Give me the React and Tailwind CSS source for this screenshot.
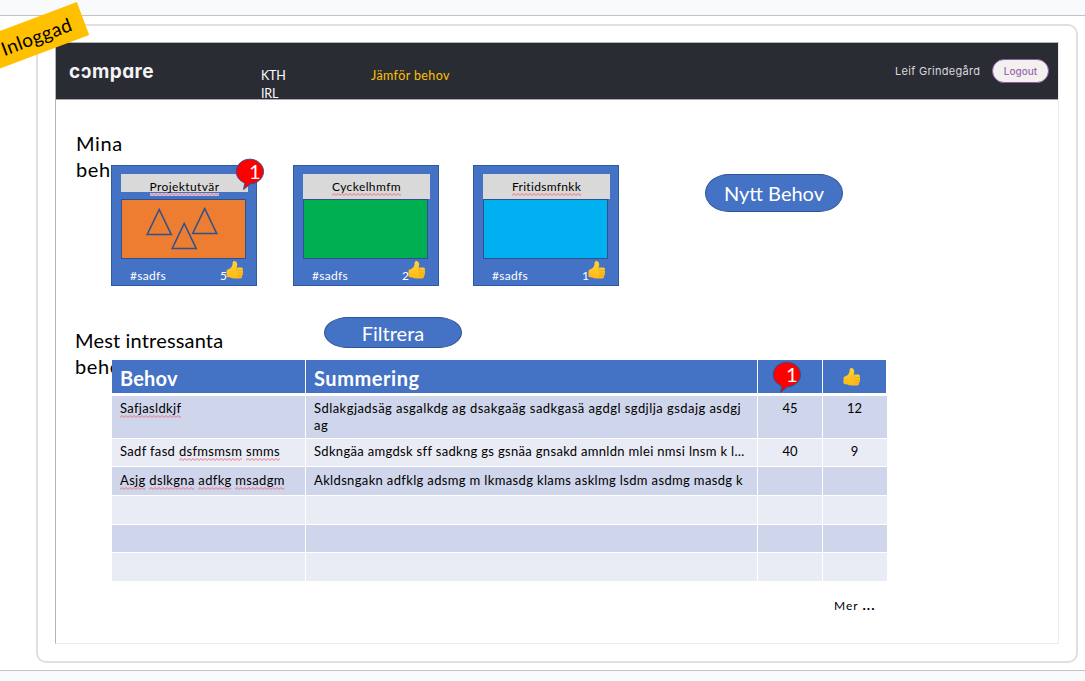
import React from "react";

const Thumb = ({ className = "" }) => (
  <svg viewBox="0 0 18 18" className={"h-[18px] w-[18px] shrink-0 " + className}>
    <defs>
      <linearGradient id="thumb" x1="0" y1="0" x2="0" y2="1">
        <stop offset="0" stopColor="#ffd23a" />
        <stop offset="1" stopColor="#fdb913" />
      </linearGradient>
    </defs>
    <path
      d="M.6 9.400Q.8 8.600 2.500 8.300 4.600 7.600 5.700 5.800 6.700 4.200 6.600 1.800 6.800.1 8.300.1 11 .3 11.200 3.500 11.200 5.300 10.500 6.500H15.400Q16.900 6.700 17 8 17 9 16.500 9.400 17.300 9.900 17.200 10.900 17.100 11.700 16.600 12.100 17 12.600 16.900 13.500 16.700 14.400 16 14.700 16.200 15.300 16 16 15.500 17.500 13.800 17.600H8.500Q6 17.600 4.300 16.600 2.500 16.200 1.200 16 .4 15.700.4 14Z"
      fill="url(#thumb)"
    />
    <path d="M11.200 9.500H16.300M11.200 12.200H16.400M11.300 14.800H15.900M11.300 7Q10.100 8.200 11.200 9.500" fill="none" stroke="#e59a12" strokeWidth=".6" />
  </svg>
);

const Bubble = ({ className = "" }) => (
  <div className={"h-[33px] w-[30px] " + className}>
    <svg viewBox="0 0 30 33" className="absolute inset-0 h-full w-full">
      <path d="M8.600 31.500 9.800 24.900C4.500 23 1.300 18.800 1.300 13.500 1.300 6.700 7.300 1.200 14.800 1.200S28.500 6.700 28.500 13.500 22.500 25.600 15.500 25.700Z" fill="#ff0000" stroke="#2f528f" strokeWidth="1" />
    </svg>
    <span className="absolute left-[14px] top-0 text-[20px] leading-[26px] text-white">1</span>
  </div>
);

const Spell = ({ children, halo }) => (
  <span className="relative inline-block">
    {children}
    <svg className="absolute -bottom-px left-0 h-[3px] w-full overflow-hidden">
      <defs>
        <pattern id="zigzag" width="4" height="3" patternUnits="userSpaceOnUse">
          <path d="M-1 1.500 0 2.500 2 .5 4 2.500 5 1.500" fill="none" stroke="#f0606c" strokeWidth=".9" />
        </pattern>
      </defs>
      {halo && <rect width="100%" height="3" fill="#e3dbe6" fillOpacity=".85" />}
      <rect width="100%" height="3" fill="url(#zigzag)" />
    </svg>
  </span>
);

const Card = ({ title, titleClass, gapClass, fill, likes, halo, children }) => (
  <div className="relative flex h-[121px] w-[146px] flex-col border border-[#2f5a9f] bg-[#4472c4] pl-[9px] pt-[8px]">
    <div className={"relative flex w-[127px] shrink-0 items-start justify-center bg-[#d9d9d9] pt-[5px] text-[12px] leading-[16px] text-black " + titleClass}>
      <Spell halo={halo}>{title}</Spell>
    </div>
    <div className={"h-[60px] w-[125px] shrink-0 border border-[#2f528f] " + gapClass + " " + fill}>{children}</div>
    <div className="flex pl-[9px] pt-[8px] text-[12px] leading-[18px] text-white">
      <span className="w-[90px] tracking-[0.3px]">#sadfs</span>
      <span className="w-[6px]">{likes}</span>
      <Thumb className="-mt-[6px]" />
    </div>
  </div>
);

const Pill = ({ className, children }) => (
  <button className={"flex w-[138px] items-center justify-center rounded-[24px/50%] border border-[#2f5597] bg-[#4472c4] text-[20px] text-white " + className}>{children}</button>
);

const Row = ({ first, second, a, b, className, track = "" }) => (
  <div className={"grid grid-cols-[193px_451px_64px_64px] gap-x-px text-[13px] leading-[17px] *:pt-[4px] " + className}>
    <div className="whitespace-nowrap px-[8px] tracking-[0.33px]">{first}</div>
    <div className={"whitespace-nowrap px-[8px] " + track}>{second}</div>
    <div className="text-center">{a}</div>
    <div className="pr-px text-center">{b}</div>
  </div>
);

export default function App() {
  return (
    <div className="relative flex h-[681px] w-[1085px] flex-col overflow-hidden bg-white font-['Lato',sans-serif] text-black">
      <div className="h-[16px] shrink-0 border-b border-[#c4c4c4] bg-[#f9fafc]" />
      <div className="ml-[36px] mt-[8px] h-[639px] w-[1042px] shrink-0 rounded-[10px] border-2 border-[#e0e0e0] bg-white pl-[17px] pt-[16px]">
        <div className="h-[602px] w-[1004px] border border-[#ececec] border-l-[#b4b4b4] border-t-[#b4b4b4]">
          <header className="flex h-[57px] border-b border-[#a9a9ac] bg-[#2a2c34] text-white">
            <div className="w-[205px] pl-[13px] pt-[15px] font-['Inter',sans-serif] text-[19px] font-bold leading-[28px] tracking-[0.45px] text-[#f4f4f4] [font-feature-settings:'cv11']">cɔmpare</div>
            <div className="w-[110px] pt-[24px] text-[12.5px] leading-[18px] tracking-[-0.2px]">KTH<br />IRL</div>
            <div className="w-[524px] pt-[24px] text-[12.5px] leading-[18px] tracking-[0.4px] text-[#ffc000]">Jämför behov</div>
            <div className="w-[97px] whitespace-nowrap pt-[20px] font-['Inter',sans-serif] text-[11px] leading-[16px] tracking-[0.29px] text-[#d8d8da]">Leif Grindegård</div>
            <button className="mt-[16px] h-[24px] w-[57px] rounded-full border border-[#8d5bab] bg-[#f3f1ee] font-['Inter',sans-serif] text-[10px] font-medium leading-[20px] text-[#9a68b8]">Logout</button>
          </header>

          <section className="flex h-[217px] flex-col pt-[30px]">
            <h2 className="ml-[20px] w-[60px] text-[20px] leading-[26px] tracking-[0.6px]">Mina behov</h2>
            <div className="relative -mt-[17px] ml-[55px] flex items-start">
              <Card title="Projektutvär" titleClass="h-[18px] tracking-[0.4px]" gapClass="mt-[7px]" fill="bg-[#ed7d31]" likes="5" halo>
                <svg viewBox="0 0 123 58" className="h-[58px] w-[123px]">
                  <path d="M25.200 34.500 37.200 9.500 49.200 34.500ZM50.200 48.500 62.200 23.500 74.200 48.500ZM70.700 33.500 82.700 8.500 94.700 33.500Z" fill="none" stroke="#2f528f" strokeWidth="1.6" />
                </svg>
              </Card>
              <div className="w-[36px]" />
              <Card title="Cyckelhmfm" titleClass="h-[25px] tracking-[0.4px]" gapClass="" fill="bg-[#00b050]" likes="2" />
              <div className="w-[34px]" />
              <Card title="Fritidsmfnkk" titleClass="h-[25px] tracking-[0.3px]" gapClass="" fill="bg-[#00b0f0]" likes="1" />
              <Pill className="ml-[86px] mt-[9px] h-[38px]">Nytt Behov</Pill>
              <Bubble className="absolute left-[124px] top-[-7px] z-20" />
            </div>
          </section>

          <section className="flex flex-col">
            <div className="flex h-[43px] items-start">
              <h2 className="ml-[19px] mt-[10px] w-[249px] pr-[80px] text-[20px] leading-[26px] tracking-[0.17px]">Mest intressanta <span className="tracking-[0.6px]">behov</span></h2>
              <Pill className="h-[31px]">Filtrera</Pill>
            </div>
            <div className="relative ml-[56px] w-[774px] bg-white">
              <div className="grid h-[33px] grid-cols-[193px_451px_64px_63px] grid-rows-[33px] gap-x-px text-[20px] font-bold leading-[36px] text-white">
                <div className="bg-[#4472c4] pl-[8px] tracking-[0.2px]">Behov</div>
                <div className="bg-[#4472c4] pl-[8px] tracking-[0.55px]">Summering</div>
                <div className="relative bg-[#4472c4] font-normal"><Bubble className="absolute left-[14px] top-px" /></div>
                <div className="bg-[#4472c4] pl-[20px] pt-[8px]"><Thumb /></div>
              </div>
              <Row className="mt-[3px] h-[42px] *:bg-[#cfd5ea]" track="tracking-[0.45px]" first={<Spell>Safjasldkjf</Spell>} second={<>Sdlakgjadsäg asgalkdg ag dsakgaäg sadkgasä agdgl sgdjlja gsdajg asdgj<br />ag</>} a="45" b="12" />
              <Row className="mt-px h-[27px] *:bg-[#e9ebf5]" track="tracking-[0.32px]" first={<>Sadf fasd <Spell>dsfmsmsm</Spell> <Spell>smms</Spell></>} second="Sdkngäa amgdsk sff sadkng gs gsnäa gnsakd amnldn mlei nmsi lnsm k l…" a="40" b="9" />
              <Row className="mt-px h-[28px] *:bg-[#cfd5ea] *:pt-[5px]" track="tracking-[0.35px]" first={<><Spell>Asjg</Spell> <Spell>dslkgna</Spell> <Spell>adfkg</Spell> <Spell>msadgm</Spell></>} second="Akldsngakn adfklg adsmg m lkmasdg klams asklmg lsdm asdmg masdg k" />
              <Row className="mt-px h-[28px] *:bg-[#e9ebf5]" />
              <Row className="mt-px h-[27px] *:bg-[#cfd5ea]" />
              <Row className="mt-px h-[28px] *:bg-[#e9ebf5]" />
            </div>
            <div className="ml-[778px] mt-[15px] text-[12px] leading-[18px] tracking-[1px]">Mer <span className="text-[14px] font-bold">...</span></div>
          </section>
        </div>
      </div>
      <div className="mt-[7px] h-[11px] shrink-0 border-t border-[#c4c4c4] bg-[#f9fafc]" />
      <div className="absolute left-[-37px] top-px flex h-[35px] w-[120px] origin-right rotate-[-20.6deg] items-center justify-end bg-[#ffc000] pr-[13px] pt-[2px] text-[19px] tracking-[0.4px]">Inloggad</div>
    </div>
  );
}
